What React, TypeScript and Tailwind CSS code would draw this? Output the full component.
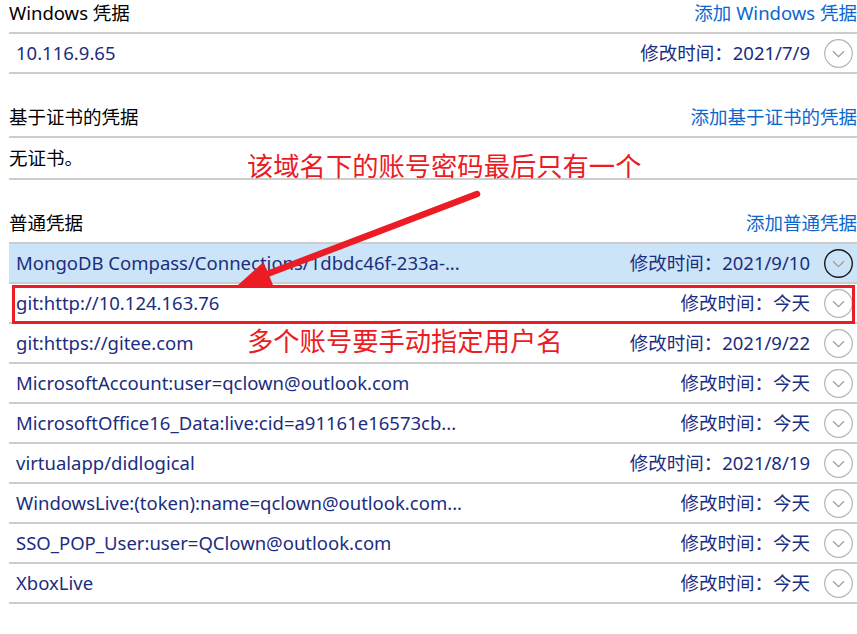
import React from "react";

type Row = { name: string; date: string; selected?: boolean };

const rows: Row[] = [
  { name: "MongoDB Compass/Connections/1dbdc46f-233a-...", date: "2021/9/10", selected: true },
  { name: "git:http://10.124.163.76", date: "今天" },
  { name: "git:https://gitee.com", date: "2021/9/22" },
  { name: "MicrosoftAccount:user=qclown@outlook.com", date: "今天" },
  { name: "MicrosoftOffice16_Data:live:cid=a91161e16573cb...", date: "今天" },
  { name: "virtualapp/didlogical", date: "2021/8/19" },
  { name: "WindowsLive:(token):name=qclown@outlook.com...", date: "今天" },
  { name: "SSO_POP_User:user=QClown@outlook.com", date: "今天" },
  { name: "XboxLive", date: "今天" },
];

function Chevron({ dark }: { dark?: boolean }) {
  return (
    <svg width="29" height="29" viewBox="0 0 29 29" className="ml-[14px] shrink-0">
      <circle
        cx="14.5"
        cy="14.5"
        r="13.8"
        fill="none"
        stroke={dark ? "#1a1a1a" : "#b5b5b5"}
        strokeWidth={dark ? 1.4 : 1.2}
      />
      <polyline
        points="9,12.2 14.5,17.6 20,12.2"
        fill="none"
        stroke="#9a9a9a"
        strokeWidth="1.2"
      />
    </svg>
  );
}

function ItemRow({ name, date, selected }: Row) {
  return (
    <div
      className={`flex h-[40px] items-center border-b-2 border-[#cccccc] pl-[7px] pr-[4px] ${
        selected ? "bg-[#cce4f7]" : ""
      }`}
    >
      <span className="flex-1 whitespace-nowrap text-[#1b2d80]">{name}</span>
      <span className="whitespace-nowrap text-[#1b2d80]">修改时间：{date}</span>
      <Chevron dark={selected} />
    </div>
  );
}

function Header({ title, link, first }: { title: string; link: string; first?: boolean }) {
  return (
    <div
      className={`flex h-[40px] items-center justify-between border-b-2 border-[#cccccc] ${
        first ? "-mt-[6px]" : "mt-[24px]"
      }`}
    >
      <span className="whitespace-nowrap text-black">{title}</span>
      <span className="whitespace-nowrap text-[#0b66d0]">{link}</span>
    </div>
  );
}

export default function App() {
  return (
    <div
      className="relative h-[634px] w-[857px] overflow-hidden bg-white text-[18.5px]"
      style={{ fontFamily: '"Noto Sans", "Noto Sans CJK SC", sans-serif' }}
    >
      <div className="ml-[9px]">
        <Header title="Windows 凭据" link="添加 Windows 凭据" first />
        <div className="flex h-[40px] items-center border-b-2 border-[#cccccc] pl-[7px] pr-[4px]">
          <span className="flex-1 whitespace-nowrap text-[#1b2d80]">10.116.9.65</span>
          <span className="whitespace-nowrap text-[#1b2d80]">修改时间：2021/7/9</span>
          <Chevron />
        </div>

        <Header title="基于证书的凭据" link="添加基于证书的凭据" />
        <div className="flex h-[42px] items-center border-b-2 border-[#cccccc]">
          <span className="text-black">无证书。</span>
        </div>

        <Header title="普通凭据" link="添加普通凭据" />
        {rows.map((r) => (
          <ItemRow key={r.name} {...r} />
        ))}
      </div>

      {/* annotations */}
      <div className="pointer-events-none absolute left-[12px] top-[285px] h-[39px] w-[843px] border-[3px] border-[#ec1c24]" />
      <div
        className="pointer-events-none absolute left-[247px] top-[150px] whitespace-nowrap text-[26.3px] leading-[30px] text-[#ec1c24]"
        style={{ fontFamily: '"Noto Sans CJK SC", sans-serif' }}
      >
        该域名下的账号密码最后只有一个
      </div>
      <div
        className="pointer-events-none absolute left-[247px] top-[325px] whitespace-nowrap text-[26.3px] leading-[30px] text-[#ec1c24]"
        style={{ fontFamily: '"Noto Sans CJK SC", sans-serif' }}
      >
        多个账号要手动指定用户名
      </div>
      <svg
        className="pointer-events-none absolute left-0 top-0"
        width="857"
        height="634"
        viewBox="0 0 857 634"
      >
        <line x1="477" y1="194" x2="262" y2="276" stroke="#ec1c24" strokeWidth="6.5" strokeLinecap="round" />
        <polygon points="238,285 263.5,262 273,285" fill="#ec1c24" />
      </svg>
    </div>
  );
}
